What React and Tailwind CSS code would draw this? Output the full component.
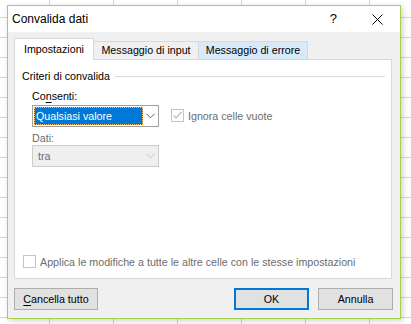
import React from 'react';

const font = { fontFamily: '"Liberation Sans", Arial, sans-serif' };

const Chevron = ({ color = '#606060' }) => (
    <svg width="9" height="6" viewBox="0 0 9 6">
        <path d="M0.5 0.8 L4.5 4.8 L8.5 0.8" fill="none" stroke={color} strokeWidth="1" />
    </svg>
);

const Checkbox = ({ checked }) => (
    <div className="w-[13px] h-[13px] border border-[#c4c4c4] bg-white flex items-center justify-center shrink-0">
        {checked && (
            <svg width="11" height="11" viewBox="0 0 11 11">
                <path d="M1.5 5.5 L4 8 L9.5 2" fill="none" stroke="#b8b8b8" strokeWidth="1.2" />
            </svg>
        )}
    </div>
);

const Tab = ({ label, active, hover, width }) => {
    if (active) {
        return (
            <div className={`${width} h-[22px] bg-white border border-b-0 border-[#d9d9d9] flex items-center justify-center text-black relative z-10 -mb-px`}>
                {label}
            </div>
        );
    }
    return (
        <div className={`${width} h-[18px] self-end border border-b-0 border-l-0 border-[#d9d9d9] flex items-center justify-center text-black ${hover ? 'bg-[#d8eaf9]' : 'bg-[#f0f0f0]'}`}>
            {label}
        </div>
    );
};

const App = () => {
    return (
        <div
            className="relative w-[411px] h-[324px] overflow-hidden bg-white bg-[linear-gradient(to_right,#d4d4d4_1px,transparent_1px),linear-gradient(to_bottom,#d4d4d4_1px,transparent_1px)] bg-[size:64px_20px] bg-[position:49px_17px]"
            style={font}
        >
            <div className="absolute left-[7px] top-[5px] w-[394px] h-[314px] border border-[#a5cf4c] bg-[#f0f0f0] shadow-[2px_2px_6px_rgba(0,0,0,0.18)] flex flex-col text-[10.7px]">
                {/* title bar */}
                <div className="h-[26px] bg-white flex items-center pl-[4px] shrink-0">
                    <span className="text-[12px] text-black">Convalida dati</span>
                    <span className="ml-auto text-[13px] text-black mr-[35px]">?</span>
                    <svg width="11" height="11" viewBox="0 0 11 11" className="mr-[17px]">
                        <path d="M0.5 0.5 L10.5 10.5 M10.5 0.5 L0.5 10.5" stroke="#000" strokeWidth="1" />
                    </svg>
                </div>

                <div className="px-[6px] pt-[6px] flex flex-col">
                    {/* tabs */}
                    <div className="flex h-[21px]">
                        <Tab label="Impostazioni" active width="w-[80px]" />
                        <Tab label="Messaggio di input" width="w-[105px]" />
                        <Tab label="Messaggio di errore" hover width="w-[109px]" />
                    </div>

                    {/* panel */}
                    <div className="w-[378px] h-[220px] bg-white border border-[#d9d9d9] flex flex-col pl-[7px] pr-[6px] pt-[8px]">
                        <div className="flex items-center h-[16px]">
                            <span className="text-black">Criteri di convalida</span>
                            <div className="flex-1 h-px bg-[#dcdcdc] ml-[5px]" />
                        </div>

                        <div className="pl-[10px] mt-[4px] flex flex-col">
                            <div className="h-[16px] flex items-center text-black">
                                Co<span className="underline underline-offset-2">n</span>senti:
                            </div>
                            <div className="flex items-center mt-[1px]">
                                <div className="w-[127px] h-[22px] border border-[#a0a0a0] bg-white flex items-center">
                                    <div className="ml-[1px] w-[109px] h-[18px] bg-[#0078d7] border border-dotted border-[#f5c26b] text-white flex items-center pl-[1px]">
                                        Qualsiasi valore
                                    </div>
                                    <div className="flex-1 flex justify-center">
                                        <Chevron />
                                    </div>
                                </div>
                                <div className="ml-[12px] flex items-center">
                                    <Checkbox checked />
                                    <span className="ml-[4px] text-[#6d6d6d]">Ignora celle vuote</span>
                                </div>
                            </div>

                            <div className="h-[14px] flex items-center text-[#6d6d6d] mt-[4px]">Dati:</div>
                            <div className="w-[127px] h-[22px] border border-[#cccccc] bg-[#efefef] flex items-center">
                                <span className="pl-[5px] text-[#6d6d6d] flex-1">tra</span>
                                <div className="w-[16px] flex justify-center">
                                    <Chevron color="#c2c2c2" />
                                </div>
                            </div>
                        </div>

                        <div className="mt-auto mb-[8px] flex items-center pl-[1px]">
                            <Checkbox />
                            <span className="ml-[4px] text-[#6d6d6d]">Applica le modifiche a tutte le altre celle con le stesse impostazioni</span>
                        </div>
                    </div>

                    {/* buttons */}
                    <div className="flex mt-[9px] text-black">
                        <button className="w-[84px] h-[22px] bg-[#e1e1e1] border border-[#adadad] flex items-center justify-center">
                            <span><span className="underline underline-offset-2">C</span>ancella tutto</span>
                        </button>
                        <button className="ml-auto w-[75px] h-[22px] bg-[#e1e1e1] border-2 border-[#0078d7] flex items-center justify-center">
                            OK
                        </button>
                        <button className="ml-[9px] mr-[1px] w-[75px] h-[22px] bg-[#e1e1e1] border border-[#adadad] flex items-center justify-center">
                            Annulla
                        </button>
                    </div>
                </div>
            </div>
        </div>
    );
};

export default App;
